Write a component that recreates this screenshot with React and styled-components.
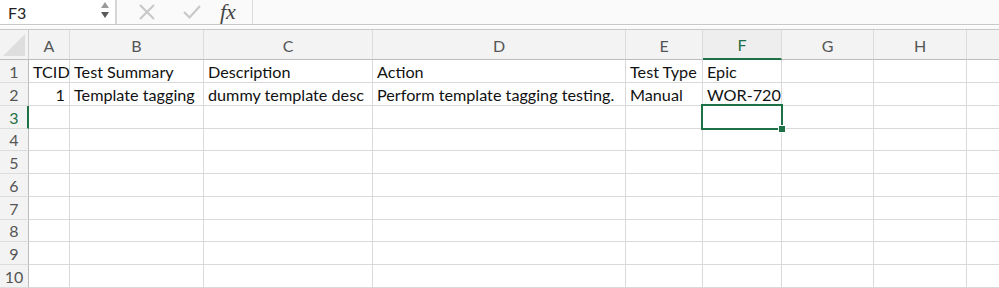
import styled, { createGlobalStyle } from "styled-components";

const GlobalStyle = createGlobalStyle`
  html, body {
    margin: 0;
    padding: 0;
    background: #fff;
    overflow: hidden;
  }
  body {
    font-family: "Lato", "Open Sans", sans-serif;
  }
`;

const GREEN = "#1e7145";
const LINE = "#d9d9d9";

// last column is only partly on screen, its letter falls past the edge
const columns = [
  { key: "A", width: 41 },
  { key: "B", width: 134 },
  { key: "C", width: 169 },
  { key: "D", width: 253 },
  { key: "E", width: 77 },
  { key: "F", width: 79 },
  { key: "G", width: 92 },
  { key: "H", width: 93 },
  { key: "", width: 92 },
];

const rowHeights = [23, 23, 23, 22, 23, 23, 23, 22, 23, 23];

const data = {
  1: ["TCID", "Test Summary", "Description", "Action", "Test Type", "Epic"],
  2: ["1", "Template tagging", "dummy template desc", "Perform template tagging testing.", "Manual", "WOR-720"],
};

const Page = styled.div`
  width: 999px;
  height: 288px;
  display: flex;
  flex-direction: column;
  overflow: hidden;
`;

const FormulaBar = styled.div`
  height: 24px;
  display: flex;
  align-items: stretch;
  background: #fafafa;
  border-bottom: 1px solid #c8c8c8;
`;

const NameBox = styled.div`
  width: 117px;
  display: flex;
  align-items: center;
  justify-content: space-between;
  padding: 0 6px 0 8px;
  box-sizing: border-box;
  background: #fff;
  border-right: 2px solid #d6d6d6;
  font-size: 16px;
  color: #222;
`;

const Spinner = styled.div`
  display: flex;
  flex-direction: column;
  gap: 4px;
  margin-top: -4px;
`;

const Arrow = styled.div`
  width: 0;
  height: 0;
  border-left: 4px solid transparent;
  border-right: 4px solid transparent;
  ${(p) =>
    p.$up
      ? `border-bottom: 6px solid #9a9a9a;`
      : `border-top: 6px solid #5a5a5a;`}
`;

const Tools = styled.div`
  display: flex;
  align-items: center;
  padding-left: 20px;
  width: 136px;
  box-sizing: border-box;
  border-right: 1px solid #dcdcdc;
`;

const ToolIcon = styled.svg`
  width: 20px;
  height: 20px;
  margin-right: ${(p) => p.$gap}px;
`;

const Fx = styled.span`
  font-family: "Liberation Serif", "DejaVu Serif", serif;
  font-style: italic;
  font-size: 22px;
  color: #444;
`;

const FormulaInput = styled.div`
  flex: 1;
  background: #fafafa;
`;

const Spacer = styled.div`
  height: 3px;
  background: #fafafa;
  border-bottom: 1px solid #c8c8c8;
  margin-top: 1px;
`;

const Sheet = styled.div`
  display: grid;
  grid-template-columns: 29px ${columns.map((c) => `${c.width}px`).join(" ")};
  grid-template-rows: 30px ${rowHeights.map((h) => `${h}px`).join(" ")};
  font-size: 16.2px;
  color: #111;
`;

const Corner = styled.div`
  background: #f3f3f3;
  border-right: 1px solid #cfcfcf;
  border-bottom: 1px solid #bdbdbd;
  box-sizing: border-box;
  position: relative;
  overflow: hidden;
`;

const CornerTriangle = styled.svg`
  position: absolute;
  right: 3px;
  bottom: 3px;
`;

const ColHeader = styled.div`
  background: ${(p) => (p.$active ? "#eeeeee" : "#f3f3f3")};
  border-right: 1px solid #dcdcdc;
  border-bottom: ${(p) => (p.$active ? `2px solid ${GREEN}` : "1px solid #bdbdbd")};
  box-sizing: border-box;
  display: flex;
  align-items: center;
  justify-content: center;
  color: ${(p) => (p.$active ? GREEN : "#555")};
  font-size: 16px;
  padding-top: 1px;
`;

const RowHeader = styled.div`
  background: #f3f3f3;
  border-right: ${(p) => (p.$active ? `2px solid ${GREEN}` : "1px solid #bdbdbd")};
  border-bottom: 1px solid #dcdcdc;
  box-sizing: border-box;
  display: flex;
  align-items: center;
  justify-content: center;
  color: ${(p) => (p.$active ? GREEN : "#555")};
  font-size: 16px;
  padding-left: ${(p) => (p.$active ? 1 : 0)}px;
`;

const Cell = styled.div`
  position: relative;
  border-right: 1px solid ${LINE};
  border-bottom: 1px solid ${LINE};
  box-sizing: border-box;
  display: flex;
  align-items: center;
  justify-content: ${(p) => (p.$number ? "flex-end" : "flex-start")};
  padding: 1px 4px 0 4px;
  white-space: nowrap;
  overflow: visible;
`;

const Selection = styled.div`
  position: absolute;
  left: -2px;
  top: -2px;
  right: -2px;
  bottom: -2px;
  border: 2px solid ${GREEN};
  z-index: 2;
`;

const FillHandle = styled.div`
  position: absolute;
  right: -5px;
  bottom: -5px;
  width: 6px;
  height: 6px;
  background: ${GREEN};
  border: 1px solid #fff;
`;

export default function App() {
  const activeCol = "F";
  const activeRow = 3;

  return (
    <Page>
      <GlobalStyle />
      <FormulaBar>
        <NameBox>
          <span>F3</span>
          <Spinner>
            <Arrow $up />
            <Arrow />
          </Spinner>
        </NameBox>
        <Tools>
          <ToolIcon $gap={25} viewBox="0 0 20 20">
            <path d="M3 3 L17 17 M17 3 L3 17" stroke="#c9c9c9" strokeWidth="2.2" fill="none" />
          </ToolIcon>
          <ToolIcon $gap={18} viewBox="0 0 20 20">
            <path d="M2 10 L7.5 15.5 L18 4" stroke="#c9c9c9" strokeWidth="2.2" fill="none" />
          </ToolIcon>
          <Fx>fx</Fx>
        </Tools>
        <FormulaInput />
      </FormulaBar>
      <Spacer />
      <Sheet>
        <Corner>
          <CornerTriangle width="22" height="22" viewBox="0 0 22 22">
            <polygon points="22,0 22,22 0,22" fill="#dedede" />
          </CornerTriangle>
        </Corner>
        {columns.map((c, ci) => (
          <ColHeader key={`c${ci}`} $active={c.key === activeCol}>
            {c.key}
          </ColHeader>
        ))}
        {rowHeights.map((_, i) => {
          const r = i + 1;
          const values = data[r] || [];
          return [
            <RowHeader key={`h${r}`} $active={r === activeRow}>
              {r}
            </RowHeader>,
            ...columns.map((c, ci) => {
              const v = values[ci];
              const isNum = v !== undefined && /^\d+$/.test(v);
              const selected = c.key === activeCol && r === activeRow;
              return (
                <Cell key={`${ci}-${r}`} $number={isNum}>
                  {v}
                  {selected && (
                    <Selection>
                      <FillHandle />
                    </Selection>
                  )}
                </Cell>
              );
            }),
          ];
        })}
      </Sheet>
    </Page>
  );
}
